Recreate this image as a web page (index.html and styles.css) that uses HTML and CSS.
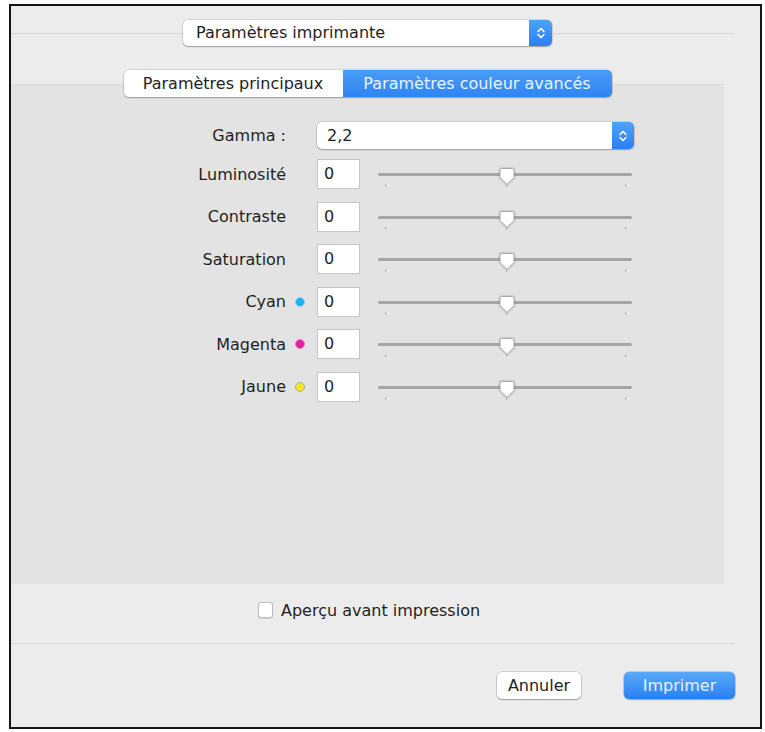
FILE: index.html
```html
<!DOCTYPE html>
<html lang="fr">
<head>
<meta charset="utf-8">
<title>Paramètres imprimante</title>
<link rel="stylesheet" href="styles.css">
</head>
<body>
<div class="window">
  <div class="header">
    <div class="hline hline-left"></div>
    <div class="popup popup-top">
      <span class="popup-text">Paramètres imprimante</span>
      <span class="stepper">
        <svg width="10" height="14" viewBox="0 0 10 14"><path d="M2 5.5 L5 2.5 L8 5.5 M2 8.5 L5 11.5 L8 8.5" fill="none" stroke="#fff" stroke-width="1.6" stroke-linecap="round" stroke-linejoin="round"/></svg>
      </span>
    </div>
    <div class="hline hline-right"></div>
  </div>

  <div class="tabs-wrap">
    <div class="tabs">
      <div class="tab">Paramètres principaux</div>
      <div class="tab tab-active">Paramètres couleur avancés</div>
    </div>
  </div>

  <div class="panel">
    <div class="row row-gamma">
      <div class="label">Gamma :</div>
      <div class="dotcell"></div>
      <div class="popup popup-gamma">
        <span class="popup-text">2,2</span>
        <span class="stepper">
          <svg width="10" height="14" viewBox="0 0 10 14"><path d="M2 5.5 L5 2.5 L8 5.5 M2 8.5 L5 11.5 L8 8.5" fill="none" stroke="#fff" stroke-width="1.6" stroke-linecap="round" stroke-linejoin="round"/></svg>
        </span>
      </div>
    </div>

    <div class="row">
      <div class="label">Luminosité</div>
      <div class="dotcell"></div>
      <div class="field">0</div>
      <div class="slider"><div class="track"></div><span class="tick t1"></span><span class="tick t2"></span><span class="tick t3"></span><svg class="thumb" width="18" height="20" viewBox="0 0 18 20"><path d="M2 3 Q2 1.5 3.5 1.5 H14.5 Q16 1.5 16 3 V10.5 L9 17.5 L2 10.5 Z" fill="#fff" stroke="#a8a8a8" stroke-width="1"/></svg></div>
    </div>

    <div class="row">
      <div class="label">Contraste</div>
      <div class="dotcell"></div>
      <div class="field">0</div>
      <div class="slider"><div class="track"></div><span class="tick t1"></span><span class="tick t2"></span><span class="tick t3"></span><svg class="thumb" width="18" height="20" viewBox="0 0 18 20"><path d="M2 3 Q2 1.5 3.5 1.5 H14.5 Q16 1.5 16 3 V10.5 L9 17.5 L2 10.5 Z" fill="#fff" stroke="#a8a8a8" stroke-width="1"/></svg></div>
    </div>

    <div class="row">
      <div class="label">Saturation</div>
      <div class="dotcell"></div>
      <div class="field">0</div>
      <div class="slider"><div class="track"></div><span class="tick t1"></span><span class="tick t2"></span><span class="tick t3"></span><svg class="thumb" width="18" height="20" viewBox="0 0 18 20"><path d="M2 3 Q2 1.5 3.5 1.5 H14.5 Q16 1.5 16 3 V10.5 L9 17.5 L2 10.5 Z" fill="#fff" stroke="#a8a8a8" stroke-width="1"/></svg></div>
    </div>

    <div class="row">
      <div class="label">Cyan</div>
      <div class="dotcell"><span class="dot dot-cyan"></span></div>
      <div class="field">0</div>
      <div class="slider"><div class="track"></div><span class="tick t1"></span><span class="tick t2"></span><span class="tick t3"></span><svg class="thumb" width="18" height="20" viewBox="0 0 18 20"><path d="M2 3 Q2 1.5 3.5 1.5 H14.5 Q16 1.5 16 3 V10.5 L9 17.5 L2 10.5 Z" fill="#fff" stroke="#a8a8a8" stroke-width="1"/></svg></div>
    </div>

    <div class="row">
      <div class="label">Magenta</div>
      <div class="dotcell"><span class="dot dot-magenta"></span></div>
      <div class="field">0</div>
      <div class="slider"><div class="track"></div><span class="tick t1"></span><span class="tick t2"></span><span class="tick t3"></span><svg class="thumb" width="18" height="20" viewBox="0 0 18 20"><path d="M2 3 Q2 1.5 3.5 1.5 H14.5 Q16 1.5 16 3 V10.5 L9 17.5 L2 10.5 Z" fill="#fff" stroke="#a8a8a8" stroke-width="1"/></svg></div>
    </div>

    <div class="row">
      <div class="label">Jaune</div>
      <div class="dotcell"><span class="dot dot-yellow"></span></div>
      <div class="field">0</div>
      <div class="slider"><div class="track"></div><span class="tick t1"></span><span class="tick t2"></span><span class="tick t3"></span><svg class="thumb" width="18" height="20" viewBox="0 0 18 20"><path d="M2 3 Q2 1.5 3.5 1.5 H14.5 Q16 1.5 16 3 V10.5 L9 17.5 L2 10.5 Z" fill="#fff" stroke="#a8a8a8" stroke-width="1"/></svg></div>
    </div>
  </div>

  <div class="preview">
    <span class="checkbox"></span>
    <span class="preview-text">Aperçu avant impression</span>
  </div>

  <div class="sep"></div>

  <div class="buttons">
    <div class="btn btn-cancel">Annuler</div>
    <div class="btn btn-print">Imprimer</div>
  </div>
</div>
</body>
</html>
```

FILE: styles.css
```css
html, body {
  margin: 0;
  padding: 0;
  background: #ffffff;
}

body {
  font-family: "DejaVu Sans", "Liberation Sans", sans-serif;
  font-size: 16px;
  color: #1f1f1f;
}

.window {
  box-sizing: border-box;
  margin: 4px 0 0 9px;
  width: 753px;
  height: 725px;
  border: 2px solid #151515;
  background: #ececec;
  display: flex;
  flex-direction: column;
}

/* header popup with line */
.header {
  display: flex;
  align-items: center;
  margin-top: 14px;
  height: 26px;
  padding-right: 25px;
}

.hline {
  height: 1px;
  background: #d6d6d6;
  flex-basis: 0;
}

.hline-left { flex-grow: 172; }
.hline-right { flex-grow: 183; }

.popup {
  box-sizing: border-box;
  display: flex;
  align-items: center;
  background: #ffffff;
  border-radius: 5px;
  box-shadow: 0 0 0 0.5px rgba(0,0,0,0.18), 0 1px 1.5px rgba(0,0,0,0.25);
  overflow: hidden;
}

.popup-top {
  width: 369px;
  height: 26px;
}

.popup-text {
  flex: 1;
  padding-left: 13px;
  line-height: 26px;
  white-space: nowrap;
}

.stepper {
  width: 23px;
  align-self: stretch;
  display: flex;
  align-items: center;
  justify-content: center;
  background: linear-gradient(#4fa2f8, #2a7ff2);
}

/* tabs */
.tabs-wrap {
  width: 713px;
  display: flex;
  justify-content: center;
  margin-top: 24px;
  margin-bottom: -13px;
  position: relative;
  z-index: 1;
}

.tabs {
  display: flex;
  height: 27px;
  border-radius: 5px;
  box-shadow: 0 0 0 0.5px rgba(0,0,0,0.2), 0 1px 1.5px rgba(0,0,0,0.25);
  overflow: hidden;
}

.tab {
  box-sizing: border-box;
  background: #ffffff;
  width: 219px;
  line-height: 27px;
  text-align: center;
  white-space: nowrap;
  color: #222222;
}

.tab-active {
  width: 269px;
  background: linear-gradient(#4a9cf8, #2f84f3);
  color: #eaf3ff;
}

/* panel */
.panel {
  box-sizing: border-box;
  width: 713px;
  height: 500px;
  background: #e3e3e3;
  border-top: 1px solid #dadada;
  padding-top: 37px;
  display: flex;
  flex-direction: column;
  gap: 12.6px;
}

.row {
  display: flex;
  align-items: center;
  height: 30px;
}

.row-gamma {
  height: 27px;
  margin-bottom: -2.6px;
}

.label {
  width: 275px;
  text-align: right;
  white-space: nowrap;
}

.dotcell {
  width: 31px;
  display: flex;
  align-items: center;
}

.dot {
  box-sizing: border-box;
  width: 10px;
  height: 10px;
  border-radius: 50%;
  margin-left: 9px;
}

.dot-cyan { background: #1cb2ee; border: 1.5px solid #8ad6f5; }
.dot-magenta { background: #e0239c; border: 1.5px solid #ea7cc4; }
.dot-yellow { background: #f2e52a; border: 1.5px solid #b3ab82; }

.popup-gamma {
  width: 317px;
  height: 27px;
}

.popup-gamma .popup-text {
  padding-left: 10px;
  line-height: 27px;
}

.popup-gamma .stepper {
  width: 22px;
}

.field {
  box-sizing: border-box;
  width: 43px;
  height: 30px;
  background: #ffffff;
  border: 1px solid #c6c6c6;
  padding-left: 6px;
  line-height: 28px;
}

.slider {
  position: relative;
  width: 254px;
  height: 30px;
  margin-left: 18px;
}

.track {
  position: absolute;
  left: 0;
  right: 0;
  top: 14px;
  height: 3px;
  border-radius: 1.5px;
  background: #a6a6a6;
}

.tick {
  position: absolute;
  top: 25px;
  width: 1px;
  height: 3px;
  background: #b3b3b3;
}

.t1 { left: 7px; }
.t2 { left: 128px; }
.t3 { left: 247px; }

.thumb {
  position: absolute;
  left: 120px;
  top: 8px;
  filter: drop-shadow(0 0.5px 0.8px rgba(0,0,0,0.25));
}

/* preview checkbox */
.preview {
  display: flex;
  align-items: center;
  height: 16px;
  margin-top: 18px;
  padding-left: 247px;
}

.checkbox {
  box-sizing: border-box;
  width: 15px;
  height: 16px;
  background: #ffffff;
  border: 1px solid #bdbdbd;
  border-radius: 3px;
  box-shadow: 0 0.5px 1px rgba(0,0,0,0.12);
}

.preview-text {
  margin-left: 8px;
  white-space: nowrap;
}

.sep {
  height: 1px;
  background: #d8d8d8;
  margin-top: 25px;
  margin-right: 25px;
}

/* buttons */
.buttons {
  display: flex;
  justify-content: flex-end;
  gap: 43px;
  margin-top: 28px;
  padding-right: 25px;
}

.btn {
  box-sizing: border-box;
  height: 27px;
  line-height: 27px;
  text-align: center;
  border-radius: 5px;
}

.btn-cancel {
  width: 84px;
  background: #ffffff;
  color: #222222;
  box-shadow: 0 0 0 0.5px rgba(0,0,0,0.22), 0 1px 1.5px rgba(0,0,0,0.25);
}

.btn-print {
  width: 111px;
  background: linear-gradient(#5aa8f9, #2a80f3);
  color: #e6f0ff;
  box-shadow: 0 0 0 0.5px rgba(0,60,160,0.35), 0 1px 1.5px rgba(0,0,0,0.2);
}
```
